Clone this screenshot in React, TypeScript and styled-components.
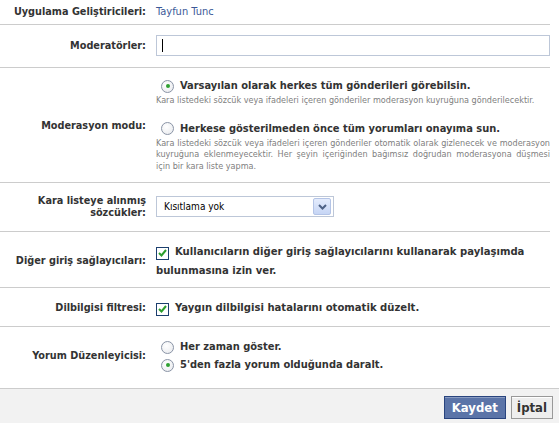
import React from 'react'
import styled, { createGlobalStyle } from 'styled-components'

const GlobalStyle = createGlobalStyle`
  body {
    margin: 0;
    background: #fff;
    font-family: "DejaVu Sans Condensed", "DejaVu Sans", sans-serif;
    font-size: 11px;
    color: #333;
  }
`

const Page = styled.div`
  width: 559px;
  height: 423px;
  display: flex;
  flex-direction: column;
  overflow: hidden;
`

const Row = styled.div<{ $pt: number; $pb: number }>`
  display: grid;
  grid-template-columns: 146px 1fr;
  column-gap: 10px;
  align-items: center;
  margin-right: 9px;
  padding-top: ${p => p.$pt}px;
  padding-bottom: ${p => p.$pb}px;
  border-bottom: 1px solid #ccc;
`

const Label = styled.div`
  text-align: right;
  font-weight: bold;
  font-size: 10.8px;
  color: #333;
  line-height: 11.5px;
`

const Value = styled.div`
  color: #3b5998;
  line-height: 13px;
`

const TextInput = styled.div`
  height: 19px;
  border: 1px solid #bdc7d8;
  display: flex;
  align-items: center;
  padding-left: 5px;
`

const Caret = styled.span`
  width: 1px;
  height: 13px;
  background: #000;
`

const OptionList = styled.div<{ $gap: number }>`
  display: flex;
  flex-direction: column;
  gap: ${p => p.$gap}px;
`

const Option = styled.div<{ $mt?: number }>`
  display: flex;
  align-items: center;
  gap: 6px;
  padding-left: 5px;
  margin-top: ${p => p.$mt ?? 0}px;
  font-weight: bold;
  font-size: 11px;
  color: #333;
  line-height: 14px;
`

const Hint = styled.div`
  font-size: 9px;
  color: #808080;
  line-height: 11.5px;
  text-align: justify;
  margin-top: 2px;
`

const RadioDot = styled.span<{ $on: boolean }>`
  width: 11px;
  height: 11px;
  border-radius: 50%;
  border: 1px solid #8a94a6;
  background: radial-gradient(circle at 40% 35%, #fff 0%, #e6e8ec 100%);
  flex-shrink: 0;
  display: flex;
  align-items: center;
  justify-content: center;
  &::after {
    content: '';
    width: 4px;
    height: 4px;
    border-radius: 50%;
    background: ${p => (p.$on ? '#2fa032' : 'transparent')};
  }
`

const CheckBox = styled.span`
  width: 11px;
  height: 11px;
  border: 1px solid #1c3f6e;
  background: #fff;
  flex-shrink: 0;
  display: flex;
  align-items: center;
  justify-content: center;
`

const CheckRow = styled.div`
  font-weight: bold;
  color: #333;
  font-size: 11.2px;
  line-height: 19px;
`

const CheckInline = styled.span`
  display: inline-flex;
  vertical-align: -2px;
  margin-right: 6px;
`

const Select = styled.div`
  width: 178px;
  height: 21px;
  border: 1px solid #bdc7d8;
  display: flex;
  align-items: center;
  justify-content: space-between;
  padding-left: 7px;
  padding-right: 2px;
  box-sizing: border-box;
  color: #000;
  font-size: 10px;
`

const SelectArrow = styled.span`
  width: 16px;
  height: 15px;
  border: 1px solid #b4c4e6;
  border-radius: 2px;
  background: linear-gradient(#e4ecfc, #c6d5f5);
  display: flex;
  align-items: center;
  justify-content: center;
`

const Footer = styled.div`
  flex: 1;
  background: #f2f2f2;
  border-top: 1px solid #ccc;
  margin-top: -1px;
  display: flex;
  justify-content: flex-end;
  align-items: flex-start;
  gap: 5px;
  padding: 7px 6px 0 0;
`

const Button = styled.button<{ $primary?: boolean }>`
  height: 23px;
  padding: 0 ${p => (p.$primary ? 7 : 5)}px;
  font-family: "DejaVu Sans Condensed", sans-serif;
  font-weight: bold;
  font-size: 13px;
  border: 1px solid ${p => (p.$primary ? '#29447e' : '#999')};
  background: ${p => (p.$primary ? '#5b74a8' : '#eee')};
  color: ${p => (p.$primary ? '#fff' : '#333')};
  box-shadow: inset 0 1px 0 ${p => (p.$primary ? '#8a9cc2' : '#fff')};
`

const Radio = ({ on }: { on: boolean }) => <RadioDot $on={on} />

const Check = () => (
  <CheckBox>
    <svg width="9" height="8" viewBox="0 0 9 8">
      <path d="M1 4 L3.5 6.5 L8 1" stroke="#2c9e2c" strokeWidth="2" fill="none" />
    </svg>
  </CheckBox>
)

export default function App() {
  return (
    <Page>
      <GlobalStyle />
      <Row $pt={5} $pb={6}>
        <Label>Uygulama Geliştiricileri:</Label>
        <Value>Tayfun Tunc</Value>
      </Row>
      <Row $pt={10} $pb={11}>
        <Label>Moderatörler:</Label>
        <TextInput>
          <Caret />
        </TextInput>
      </Row>
      <Row $pt={11} $pb={10}>
        <Label>Moderasyon modu:</Label>
        <div>
          <Option>
            <Radio on />
            <span>Varsayılan olarak herkes tüm gönderileri görebilsin.</span>
          </Option>
          <Hint>Kara listedeki sözcük veya ifadeleri içeren gönderiler moderasyon kuyruğuna gönderilecektir.</Hint>
          <Option $mt={15}>
            <Radio on={false} />
            <span>Herkese gösterilmeden önce tüm yorumları onayıma sun.</span>
          </Option>
          <Hint>
            Kara listedeki sözcük veya ifadeleri içeren gönderiler otomatik olarak gizlenecek ve moderasyon kuyruğuna eklenmeyecektir. Her şeyin içeriğinden bağımsız doğrudan moderasyona düşmesi için bir kara liste yapma.
          </Hint>
        </div>
      </Row>
      <Row $pt={12} $pb={13}>
        <Label>
          Kara listeye alınmış
          <br />
          sözcükler:
        </Label>
        <Select>
          Kısıtlama yok
          <SelectArrow>
            <svg width="9" height="6" viewBox="0 0 9 6">
              <path d="M1 1 L4.5 4.5 L8 1" stroke="#4d6185" strokeWidth="2" fill="none" />
            </svg>
          </SelectArrow>
        </Select>
      </Row>
      <Row $pt={10} $pb={7}>
        <Label>Diğer giriş sağlayıcıları:</Label>
        <CheckRow>
          <CheckInline>
            <Check />
          </CheckInline>
          Kullanıcıların diğer giriş sağlayıcılarını kullanarak paylaşımda bulunmasına izin ver.
        </CheckRow>
      </Row>
      <Row $pt={10} $pb={9}>
        <Label>Dilbilgisi filtresi:</Label>
        <CheckRow>
          <CheckInline>
            <Check />
          </CheckInline>
          Yaygın dilbilgisi hatalarını otomatik düzelt.
        </CheckRow>
      </Row>
      <Row $pt={13} $pb={16}>
        <Label>Yorum Düzenleyicisi:</Label>
        <OptionList $gap={4}>
          <Option>
            <Radio on={false} />
            <span>Her zaman göster.</span>
          </Option>
          <Option>
            <Radio on />
            <span>5'den fazla yorum olduğunda daralt.</span>
          </Option>
        </OptionList>
      </Row>
      <Footer>
        <Button $primary>Kaydet</Button>
        <Button>İptal</Button>
      </Footer>
    </Page>
  )
}
